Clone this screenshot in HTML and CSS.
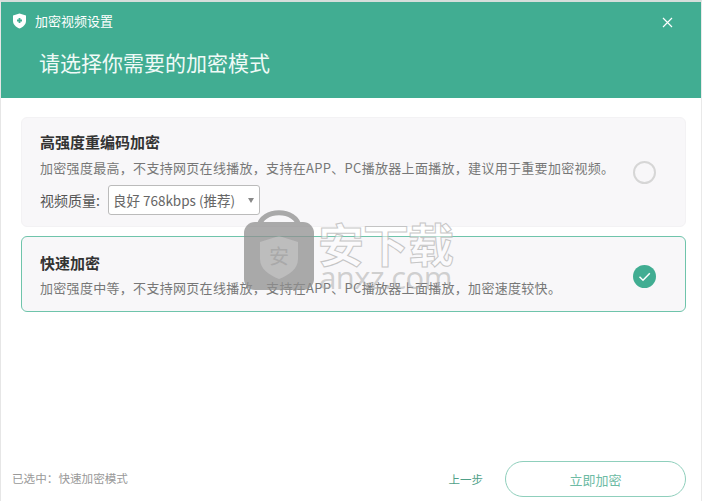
FILE: index.html
```html
<!DOCTYPE html>
<html lang="zh-CN">
<head>
    <meta charset="UTF-8">
    <title>加密视频设置</title>
    <link rel="stylesheet" href="styles.css">
</head>
<body>

    <div class="window">
        <!-- Header -->
        <div class="header">
            <div class="title-bar">
                <svg class="shield" width="15" height="16" viewBox="0 0 15 16">
                    <path d="M7.5 0.5 L14 2.6 V8 C14 11.6 11 14.2 7.5 15.5 C4 14.2 1 11.6 1 8 V2.6 Z" fill="#fff"/>
                    <path d="M7.5 5 V10 M5 7.5 H10" stroke="#41ad92" stroke-width="1.8"/>
                </svg>
                <span class="title">加密视频设置</span>
                <svg class="close" width="11" height="11" viewBox="0 0 11 11">
                    <path d="M1 1 L10 10 M10 1 L1 10" stroke="#fff" stroke-width="1.2"/>
                </svg>
            </div>
            <h1>请选择你需要的加密模式</h1>
        </div>

        <!-- Options -->
        <div class="content">
            <div class="card">
                <div class="card-text">
                    <h2>高强度重编码加密</h2>
                    <p>加密强度最高，不支持网页在线播放，支持在APP、PC播放器上面播放，建议用于重要加密视频。</p>
                    <div class="quality">
                        <span>视频质量:</span>
                        <div class="select">
                            <span>良好 768kbps (推荐)</span>
                            <i class="arrow"></i>
                        </div>
                    </div>
                </div>
                <div class="radio"></div>
            </div>

            <div class="card card-active">
                <div class="card-text">
                    <h2>快速加密</h2>
                    <p>加密强度中等，不支持网页在线播放，支持在APP、PC播放器上面播放，加密速度较快。</p>
                </div>
                <div class="radio radio-checked">
                    <svg width="23" height="23" viewBox="0 0 23 23">
                        <path d="M6.5 11.8 L10 15.2 L16.8 8.2" fill="none" stroke="#fff" stroke-width="1.5"/>
                    </svg>
                </div>
            </div>
        </div>

        <!-- Footer -->
        <div class="footer">
            <span class="selected">已选中：快速加密模式</span>
            <div class="actions">
                <a class="prev">上一步</a>
                <button class="button">立即加密</button>
            </div>
        </div>

        <!-- Watermark over the page -->
        <div class="watermark">
            <svg width="72" height="82" viewBox="0 0 72 82">
                <path d="M16 18 C18 -1 54 -1 56 18" fill="none" stroke="#8f8f8f" stroke-width="5"/>
                <rect x="1" y="13" width="70" height="68" rx="11" fill="#8f8f8f"/>
                <path d="M36 27 L55 33 V50 C55 60 46 66 36 70 C26 66 17 60 17 50 V33 Z" fill="#aaa"/>
                <text x="36" y="55" text-anchor="middle" font-size="20" fill="#8f8f8f">安</text>
            </svg>
            <div class="mark-text">
                <span class="mark-cn">安下载</span>
                <span class="mark-en">anxz.com</span>
            </div>
        </div>
    </div>

</body>
</html>
```

FILE: styles.css
```css
* {
    margin: 0;
    padding: 0;
    box-sizing: border-box;
}

body {
    font-family: 'Noto Sans CJK SC', 'Open Sans', sans-serif;
    background-color: white;
    overflow: hidden;
}

.window {
    position: relative;
    width: 702px;
    height: 501px;
    display: flex;
    flex-direction: column;
    border-top: 2px solid #d5dedb;
    border-left: 1px solid #e6e6e6;
    border-right: 1px solid #e9e9e9;
    background-color: white;
}

.header {
    height: 96px;
    background-color: #41ad92;
    color: white;
    padding: 10px 28px 0 11px;
}

.title-bar {
    display: flex;
    align-items: center;
    height: 18px;
}

.shield {
    margin-right: 8px;
}

.title {
    font-size: 13px;
    line-height: 18px;
    flex: 1;
}

.close {
    margin-top: 2px;
}

.header h1 {
    font-size: 21px;
    font-weight: 400;
    line-height: 30px;
    margin: 17px 0 0 27px;
    color: #f0faf7;
}

.content {
    flex: 1;
    display: flex;
    flex-direction: column;
    gap: 9px;
    padding: 19px 15px 0 20px;
}

.card {
    display: flex;
    align-items: center;
    height: 110px;
    padding: 0 29px 0 18px;
    background-color: #f8f7f9;
    border: 1px solid #f3f2f4;
    border-radius: 6px;
}

.card-active {
    height: 76px;
    border-color: #6fc4ab;
}

.card-active .radio {
    margin-top: 5px;
}

.card-text {
    flex: 1;
    align-self: flex-start;
    padding-top: 13px;
}

.card-active .card-text {
    padding-top: 15px;
}

.card h2 {
    font-size: 15px;
    font-weight: 700;
    line-height: 22px;
    color: #333;
}

.card p {
    font-size: 13px;
    letter-spacing: 0.3px;
    line-height: 20px;
    margin-top: 4px;
    color: #777;
    white-space: nowrap;
}

.card:not(.card-active) p {
    margin-top: 5px;
}

.quality {
    display: flex;
    align-items: center;
    gap: 8px;
    margin-top: 7px;
    font-size: 14px;
    color: #555;
}

.select {
    display: flex;
    align-items: center;
    justify-content: space-between;
    width: 152px;
    height: 30px;
    padding: 0 5px 0 4px;
    background-color: white;
    border: 1px solid #bbb;
    border-radius: 3px;
    font-size: 13.5px;
    color: #666;
}

.arrow {
    width: 0;
    height: 0;
    border-left: 3px solid transparent;
    border-right: 3px solid transparent;
    border-top: 5px solid #888;
}

.radio {
    width: 23px;
    height: 23px;
    border: 2px solid #d6d6d6;
    border-radius: 50%;
}

.radio-checked {
    border: none;
    background-color: #41ad92;
}

.radio-checked svg {
    display: block;
}

.footer {
    display: flex;
    justify-content: space-between;
    align-items: flex-end;
    padding: 0 15px 4px 11px;
}

.selected {
    font-size: 11.6px;
    line-height: 18px;
    margin-bottom: 10px;
    color: #999;
}

.actions {
    display: flex;
    align-items: center;
    gap: 22px;
}

.prev {
    font-size: 11.5px;
    color: #4f9f88;
}

.button {
    width: 181px;
    height: 36px;
    background-color: white;
    border: 1px solid #8fcfbc;
    border-radius: 18px;
    font-family: inherit;
    font-size: 13px;
    color: #6dbba4;
}

.watermark {
    position: absolute;
    left: 242px;
    top: 207px;
    display: flex;
    gap: 3px;
    pointer-events: none;
    opacity: 0.75;
}

.mark-text {
    display: flex;
    flex-direction: column;
    align-items: center;
    margin-top: 8px;
}

.mark-cn {
    font-size: 46px;
    font-weight: 700;
    line-height: 50px;
    letter-spacing: -1px;
    color: rgba(255, 255, 255, 0.7);
    -webkit-text-stroke: 1px #b5b5b5;
}

.mark-en {
    font-family: 'Open Sans', sans-serif;
    font-size: 31px;
    letter-spacing: -0.6px;
    line-height: 26px;
    margin-top: -3px;
    color: rgba(170, 170, 170, 0.7);
}
```
